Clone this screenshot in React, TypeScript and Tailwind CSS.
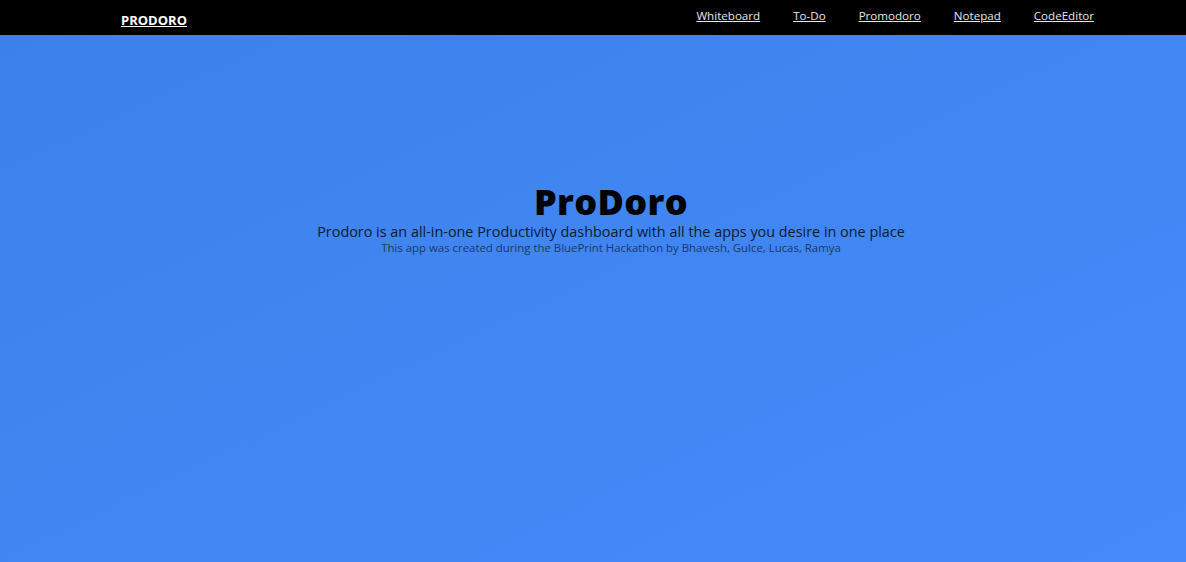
export default function App() {
  const links = ['Whiteboard', 'To-Do', 'Promodoro', 'Notepad', 'CodeEditor']
  return (
    <div
      className="min-h-[562px] w-full flex flex-col bg-gradient-to-br from-[#3c81e9] to-[#458bfb]"
      style={{ fontFamily: '"Open Sans", "Noto Sans", sans-serif' }}
    >
      {/* Navbar */}
      <nav className="h-[35px] bg-black flex items-start justify-between pl-[121px] pr-[92px]">
        <a href="#" className="mt-[12px] text-[13px] font-bold text-white underline leading-[16px]">
          PRODORO
        </a>
        <div className="flex gap-[33px] mt-[8px]">
          {links.map((l) => (
            <a key={l} href="#" className="text-[11.6px] text-[#e5e5e5] underline leading-[16px]">
              {l}
            </a>
          ))}
        </div>
      </nav>

      {/* Hero */}
      <div className="flex flex-col items-center pt-[146px] pl-[36px] text-center">
        <h1 className="text-[36px] font-extrabold text-black leading-[42px] tracking-[0.3px]">ProDoro</h1>
        <p className="text-[14.4px] text-[#0c1a33] leading-[18px]">
          Prodoro is an all-in-one Productivity dashboard with all the apps you desire in one place
        </p>
        <p className="text-[11.4px] text-[#1c3766] leading-[13px]">
          This app was created during the BluePrint Hackathon by Bhavesh, Gulce, Lucas, Ramya
        </p>
      </div>
    </div>
  )
}
